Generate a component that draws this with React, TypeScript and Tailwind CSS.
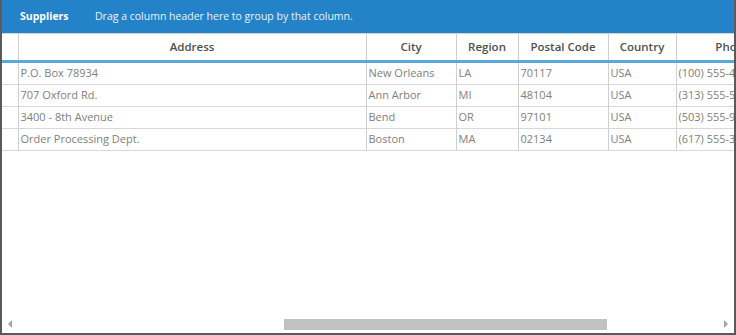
import React from 'react';

const columns = [
  { key: 'address', title: 'Address', width: 348 },
  { key: 'city', title: 'City', width: 90 },
  { key: 'region', title: 'Region', width: 62 },
  { key: 'postal', title: 'Postal Code', width: 90 },
  { key: 'country', title: 'Country', width: 68 },
  { key: 'phone', title: 'Phone', width: 114 },
];

const rows = [
  { address: 'P.O. Box 78934', city: 'New Orleans', region: 'LA', postal: '70117', country: 'USA', phone: '(100) 555-4822' },
  { address: '707 Oxford Rd.', city: 'Ann Arbor', region: 'MI', postal: '48104', country: 'USA', phone: '(313) 555-5735' },
  { address: '3400 - 8th Avenue', city: 'Bend', region: 'OR', postal: '97101', country: 'USA', phone: '(503) 555-9931' },
  { address: 'Order Processing Dept.', city: 'Boston', region: 'MA', postal: '02134', country: 'USA', phone: '(617) 555-3267' },
];

export default function App() {
  return (
    <div
      className="w-[736px] h-[335px] flex flex-col overflow-hidden bg-white border-x-2 border-b-2 border-[#5a5a5a]"
      style={{ fontFamily: '"Open Sans", "Noto Sans", sans-serif' }}
    >
      {/* Group panel */}
      <div className="h-[33px] shrink-0 bg-[#2382c8] flex items-center pl-[18px] pt-px text-white text-[10.5px]">
        <span className="font-bold w-[75px]">Suppliers</span>
        <span className="text-white/90">Drag a column header here to group by that column.</span>
      </div>

      {/* Grid */}
      <div className="flex-1 overflow-hidden">
        <table className="table-fixed border-collapse w-max">
          <colgroup>
            <col className="w-[16px]" />
            {columns.map((c) => (
              <col key={c.key} style={{ width: c.width }} />
            ))}
          </colgroup>
          <thead>
            <tr className="h-[26px] border-t border-[#d4d4d4]">
              <th className="border-r border-[#cfcfcf] p-0" />
              {columns.map((c) => (
                <th
                  key={c.key}
                  className="border-r border-[#cfcfcf] p-0 text-[11.5px] font-semibold text-[#4f4f4f] text-center whitespace-nowrap overflow-hidden"
                >
                  {c.title}
                </th>
              ))}
            </tr>
            <tr className="h-[3px]">
              <th colSpan={columns.length + 1} className="p-0 bg-[#5aa8dc]" />
            </tr>
          </thead>
          <tbody>
            {rows.map((r, i) => (
              <tr key={i} className="h-[22px] border-b border-[#d8d8d8]">
                <td className="border-r border-[#d0d0d0] p-0" />
                {columns.map((c) => (
                  <td
                    key={c.key}
                    className="border-r border-[#d0d0d0] pl-[2px] pr-0 py-0 text-[11px] text-[#808080] whitespace-nowrap overflow-hidden"
                  >
                    {r[c.key as keyof typeof r]}
                  </td>
                ))}
              </tr>
            ))}
          </tbody>
        </table>
      </div>

      {/* Horizontal scrollbar */}
      <div className="h-[16px] shrink-0 flex items-center px-[5px] pb-[2px]">
        <svg width="6" height="10" viewBox="0 0 6 10" className="shrink-0">
          <path d="M5 1 L1 5 L5 9 Z" fill="#a6a6a6" />
        </svg>
        <div className="flex-1 h-[11px] ml-[271px] mr-[116px]">
          <div className="h-full w-full bg-[#c2c2c2]" />
        </div>
        <svg width="6" height="10" viewBox="0 0 6 10" className="shrink-0">
          <path d="M1 1 L5 5 L1 9 Z" fill="#a6a6a6" />
        </svg>
      </div>
    </div>
  );
}
